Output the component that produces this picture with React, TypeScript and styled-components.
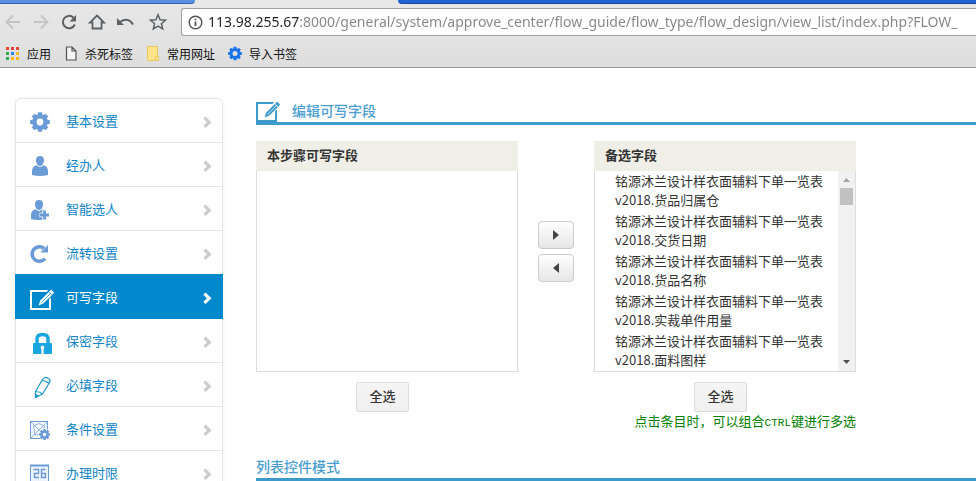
import React from "react";
import styled, { createGlobalStyle, css } from "styled-components";

const GlobalStyle = createGlobalStyle`
  *, *::before, *::after { box-sizing: border-box; }
  body {
    margin: 0;
    background: #fff;
    color: #333;
    font: 13px/20px "Noto Sans CJK SC", sans-serif;
  }
  a { text-decoration: none; }
  button, input, select { font: inherit; }
`;

const ACCENT = "#3d9acb";
const SOFT_BLUE = "#6b9bd6";

const Page = styled.div`
  height: 100vh;
  overflow: hidden;
`;

/* ---------- browser chrome ---------- */

const Chrome = styled.header`
  background: linear-gradient(#e8e8e8, #dedede);
  border-bottom: 1px solid #999;
`;

const TabStrip = styled.div`
  display: flex;
  height: 4px;
`;

const TabEdge = styled.div<{ $front?: boolean }>`
  ${(p) =>
    p.$front
      ? css`
          width: 203px;
        `
      : css`
          width: 195px;
          background: #5a8fe4;
          border-bottom: 1px solid #3465b5;
          border-bottom-right-radius: 4px;
        `}
`;

const StripRest = styled.div`
  flex: 1;
  background: #1f63d2;
  border-bottom: 1px solid #174a9c;
  border-bottom-left-radius: 4px;
`;

const Toolbar = styled.div`
  display: flex;
  align-items: center;
  gap: 8px;
  height: 36px;
  padding-left: 3px;
`;

const ToolButton = styled.button<{ $faded?: boolean }>`
  display: flex;
  padding: 0;
  border: 0;
  background: none;
  color: ${(p) => (p.$faded ? "#c4c4c4" : "#5f6062")};
`;

const Star = styled(ToolButton)`
  margin: 0 5px;
`;

const AddressBox = styled.div`
  flex: 1;
  display: flex;
  align-items: center;
  gap: 5px;
  height: 28px;
  padding-left: 6px;
  background: #fff;
  border: 1px solid #a0a0a0;
  border-right: 0;
  border-radius: 3px 0 0 3px;
`;

const Address = styled.input`
  flex: 1;
  min-width: 0;
  height: 24px;
  padding: 0;
  border: 0;
  outline: 0;
  font: 14px/24px "Noto Sans", sans-serif;
  color: transparent;
  background: linear-gradient(to right, #222 91px, #858585 91px);
  background-clip: text;
  -webkit-background-clip: text;
`;

const Bookmarks = styled.nav`
  display: flex;
  align-items: center;
  height: 27px;
  padding-left: 5px;
  gap: 12px;
`;

const Bookmark = styled.a`
  display: flex;
  align-items: center;
  gap: 6px;
  color: #111;
  font-size: 12px;
`;

/* ---------- page body ---------- */

const Body = styled.div`
  display: flex;
  align-items: flex-start;
  gap: 33px;
  padding: 30px 0 0 15px;
`;

const SideList = styled.ul`
  flex: none;
  width: 208px;
  margin: 0;
  padding: 0;
  list-style: none;
  border-radius: 6px;
  box-shadow: 0 1px 4px rgba(0, 0, 0, 0.065);
`;

const SideItem = styled.li`
  margin-bottom: -1px;
  &:first-child a {
    border-radius: 6px 6px 0 0;
  }
`;

const SideLink = styled.a<{ $active?: boolean }>`
  position: relative;
  z-index: ${(p) => (p.$active ? 1 : 0)};
  display: flex;
  align-items: center;
  gap: 10px;
  height: 45px;
  padding: 0 10px 0 14px;
  border: 1px solid ${(p) => (p.$active ? "#0088cc" : "#e5e5e5")};
  background: ${(p) => (p.$active ? "#0088cc" : "#fff")};
  color: ${(p) => (p.$active ? "#fff" : "#0f84c8")};
`;

const SideText = styled.span`
  flex: 1;
`;

const Chevron = styled.svg<{ $active?: boolean }>`
  fill: ${(p) => (p.$active ? "#fff" : "#ccc")};
`;

const Main = styled.main`
  flex: 1;
  min-width: 0;
`;

const SectionTitle = styled.h2`
  display: flex;
  align-items: center;
  gap: 10px;
  height: 27px;
  margin: 0;
  border-bottom: 3px solid ${ACCENT};
  color: #4a9ed0;
  font-size: 14px;
  font-weight: 500;
  line-height: 24px;
`;

const Transfer = styled.section`
  display: flex;
  align-items: flex-start;
  gap: 20px;
  padding: 16px 0 22px;
`;

const Column = styled.div`
  display: flex;
  flex-direction: column;
  width: 262px;
`;

const PanelLabel = styled.label`
  height: 30px;
  padding-left: 11px;
  background: #f0efe7;
  color: #333;
  font-weight: 700;
  line-height: 28px;
`;

const PanelFrame = styled.div`
  display: flex;
  height: 201px;
  border: 1px solid #ddd;
  border-top: 0;
`;

const FieldList = styled.select`
  flex: 1;
  min-width: 0;
  height: 200px;
  padding: 0;
  border: 0;
  outline: 0;
  background: #fff;
  color: #333;
  scrollbar-width: none;
`;

const Field = styled.option`
  display: block;
  min-height: 40px;
  padding: 0 0 0 20px;
  line-height: 20px;
  white-space: normal;
`;

const ScrollTrack = styled.div`
  display: flex;
  flex-direction: column;
  align-items: center;
  width: 17px;
  background: #f1f1f1;
`;

const ScrollThumb = styled.div`
  width: 13px;
  height: 17px;
  margin-bottom: auto;
  background: #c1c1c1;
`;

const MoveButtons = styled.div`
  display: flex;
  flex-direction: column;
  gap: 5px;
  padding-top: 80px;
`;

const MoveButton = styled.button`
  display: flex;
  align-items: center;
  justify-content: center;
  width: 36px;
  height: 28px;
  padding: 0;
  border: 1px solid #ccc;
  border-radius: 4px;
  background: linear-gradient(#fff, #e6e6e6);
`;

const SelectAllRow = styled.div`
  display: flex;
  justify-content: center;
  padding: 10px 9px 0 0;
`;

const SelectAll = styled.button`
  width: 53px;
  height: 30px;
  padding: 0 0 2px;
  border: 1px solid #dcdcdc;
  border-radius: 2px;
  background: linear-gradient(#f5f5f5, #f0f0f0);
  color: #333;
  font-weight: 500;
`;

const Hint = styled.p`
  margin: 0;
  color: #008000;
  line-height: 18px;
  padding-bottom: 2px;
  text-align: right;
  white-space: nowrap;
`;

const Latin = styled.span`
  font: 11px "Liberation Mono", monospace;
`;

/* ---------- icons ---------- */

const gearPath = (cx: number, cy: number, r: number, hole: number) => {
  const pts: string[] = [];
  const inner = r * 0.78;
  for (let i = 0; i < 8; i++) {
    const a = (i * Math.PI) / 4;
    [
      [-0.3, inner],
      [-0.2, r],
      [0.2, r],
      [0.3, inner],
    ].forEach(([d, q]) =>
      pts.push(`${(cx + q * Math.sin(a + d)).toFixed(2)} ${(cy - q * Math.cos(a + d)).toFixed(2)}`)
    );
  }
  return `M${pts.join("L")}ZM${cx - hole} ${cy}a${hole} ${hole} 0 1 0 ${hole * 2} 0a${hole} ${hole} 0 1 0 ${-hole * 2} 0Z`;
};

const EditShape = ({ color, back }: { color: string; back: string }) => (
  <>
    <path d="M0 0H21V20H0ZM2 2V18H19V2Z" fill={color} fillRule="evenodd" />
    <path d="M8 16L10 10L19 -1L25 3.500L14 14Z" fill={back} />
    <path d="M8.500 15.500L10.300 10.600L19.800 1L21.300 -.2L24 2.200L23 4L13.400 13.600Z" fill={color} />
    <path d="M11.500 12.500L21.300 2.700M18.600 2L22 5" stroke={back} strokeWidth=".7" fill="none" />
  </>
);

const icons: Record<string, React.ReactNode> = {
  gear: <path d={gearPath(10, 15, 10, 3.4)} fill={SOFT_BLUE} fillRule="evenodd" />,
  person: (
    <g fill={SOFT_BLUE}>
      <path d="M10 5C13 5 14.200 7 14 9.500C13.800 12.500 12 15 10 15S6.200 12.500 6 9.500C5.800 7 7 5 10 5Z" />
      <path d="M6.500 14.200L10 16.200L13.500 14.200C16.500 15 18 17 18 20V24Q10 26 2 24V20C2 17 3.500 15 6.500 14.200Z" />
    </g>
  ),
  personAdd: (
    <g>
      <path d="M9 5C12 5 13.200 7 13 9.500C12.800 12.500 11 15 9 15S5.200 12.500 5 9.500C4.800 7 6 5 9 5Z" fill={SOFT_BLUE} />
      <path d="M5.500 14.200L9 16.200L12.500 14.200C14.500 15 16 16 16.500 18V24Q9 26 1 24V20C1 17 2.500 15 5.500 14.200Z" fill={SOFT_BLUE} />
      <path d="M14.500 15V25.500M9.500 20H20" stroke="#fff" strokeWidth="4.500" />
      <path d="M14.500 15.500V24.500M10 20H19" stroke={SOFT_BLUE} strokeWidth="2.800" />
    </g>
  ),
  refresh: (
    <g>
      <path d="M15 19.500A7.200 7.200 0 1 1 14 9.500" fill="none" stroke={SOFT_BLUE} strokeWidth="3.600" />
      <path d="M18 6V13.500H10.500Z" fill={SOFT_BLUE} />
    </g>
  ),
  edit: (
    <g transform="translate(0 7)">
      <EditShape color="#fff" back="#0088cc" />
    </g>
  ),
  lock: (
    <g>
      <path d="M7 17V12Q7 7.500 12.500 7.500T18 12V17" fill="none" stroke="#18a5e0" strokeWidth="3.400" />
      <rect x="3" y="16" width="19" height="11" rx="1" fill="#18a5e0" />
      <path d="M12.500 18.500A2 2 0 0 1 13.600 22.100V27H11.400V22.100A2 2 0 0 1 12.500 18.500Z" fill="#fff" />
    </g>
  ),
  pencil: (
    <g fill="none" stroke="#1b95cf" strokeWidth="1.200" strokeLinejoin="round">
      <path d="M5.500 26.500V20.500L12.500 8.500Q15 5 18.500 7.500Q21 9 19.500 11.500L12.500 23Z" />
      <path d="M12 9.500Q16 9.500 19 12.500M5.500 20.500Q10 20.500 12.500 23" />
      <path d="M5.500 26.500V23.500L8 25Z" fill="#1b95cf" />
    </g>
  ),
  condition: (
    <g>
      <g fill="none" stroke={SOFT_BLUE}>
        <rect x=".5" y="6.500" width="17" height="17" fill="#f3f7fc" />
        <path d="M1 7L17 23M17 7L1 23M9 8.500L14.500 11L13.500 19L5 20L3.500 11Z" strokeWidth=".7" />
      </g>
      <circle cx="14.500" cy="19.500" r="6" fill="#fff" />
      <path d={gearPath(14.5, 19.5, 5.6, 1.8)} fill={SOFT_BLUE} fillRule="evenodd" />
    </g>
  ),
  calendar: (
    <g fill="none" stroke={SOFT_BLUE}>
      <rect x=".5" y="6.500" width="18" height="17" fill="#edf3fb" />
      <path d="M0 6.500H19" strokeWidth="2" />
      <path d="M3.500 10.500H8.500V14.500H4.500V18.500H9M15.500 10.500H11.500V18.500H15.500V14.500H11.500" strokeWidth="1.400" />
    </g>
  ),
};

const sideItems = [
  { icon: "gear", text: "基本设置" },
  { icon: "person", text: "经办人" },
  { icon: "personAdd", text: "智能选人" },
  { icon: "refresh", text: "流转设置" },
  { icon: "edit", text: "可写字段", active: true },
  { icon: "lock", text: "保密字段" },
  { icon: "pencil", text: "必填字段" },
  { icon: "condition", text: "条件设置" },
  { icon: "calendar", text: "办理时限" },
];

const fields = ["货品归属仓", "交货日期", "货品名称", "实裁单件用量", "面料图样"];

const ToolIcon = ({ children }: { children: React.ReactNode }) => (
  <svg width="20" height="20" viewBox="0 0 20 20" fill="none" stroke="currentColor" strokeWidth="2" aria-hidden="true">
    {children}
  </svg>
);

const appColors = ["#ea4335", "#ea4335", "#ea4335", "#34a853", "#2a86f3", "#fbbc05", "#34a853", "#fbbc05", "#fbbc05"];

const BrowserChrome = () => (
  <Chrome>
    <TabStrip>
      <TabEdge />
      <TabEdge $front />
      <StripRest />
    </TabStrip>
    <Toolbar>
      <ToolButton $faded aria-label="后退">
        <ToolIcon><path d="M17 10H4M10 3.500L3.500 10L10 16.500" /></ToolIcon>
      </ToolButton>
      <ToolButton $faded aria-label="前进">
        <ToolIcon><path d="M3 10H16M10 3.500L16.500 10L10 16.500" /></ToolIcon>
      </ToolButton>
      <ToolButton aria-label="刷新">
        <ToolIcon>
          <path d="M15.800 12.500A6.200 6.200 0 1 1 14.500 5.700" />
          <path d="M17 3V9.500H10.500Z" fill="currentColor" stroke="none" />
        </ToolIcon>
      </ToolButton>
      <ToolButton aria-label="主页">
        <ToolIcon><path d="M10 3.500L17 10.500H14.500V16.500H5.500V10.500H3Z" strokeWidth="1.800" /></ToolIcon>
      </ToolButton>
      <ToolButton aria-label="撤销">
        <ToolIcon>
          <path d="M5 10Q13 4.500 18 12.500" />
          <path d="M2 6V13H9Z" fill="currentColor" stroke="none" />
        </ToolIcon>
      </ToolButton>
      <Star aria-label="收藏">
        <ToolIcon>
          <path d="M10 2.800L12.100 7.800L17.500 8.200L13.400 11.700L14.700 17L10 14.100L5.300 17L6.600 11.700L2.500 8.200L7.900 7.800Z" strokeWidth="1.500" />
        </ToolIcon>
      </Star>
      <AddressBox>
        <svg width="15" height="15" viewBox="0 0 15 15" fill="none" stroke="#555" aria-hidden="true">
          <circle cx="7.500" cy="7.500" r="6.300" strokeWidth="1.500" />
          <path d="M7.500 6.500V11M7.500 3.700V5.300" strokeWidth="1.800" />
        </svg>
        <Address
          aria-label="地址"
          defaultValue="113.98.255.67:8000/general/system/approve_center/flow_guide/flow_type/flow_design/view_list/index.php?FLOW_"
        />
      </AddressBox>
    </Toolbar>
    <Bookmarks aria-label="书签">
      <Bookmark href="#apps">
        <svg width="16" height="15" viewBox="0 0 16 15" aria-hidden="true">
          {appColors.map((c, i) => (
            <rect key={i} x={1 + (i % 3) * 5} y={1 + Math.floor(i / 3) * 5} width="3" height="3" fill={c} />
          ))}
        </svg>
        应用
      </Bookmark>
      <Bookmark href="#kill">
        <svg width="16" height="15" viewBox="0 0 16 15" aria-hidden="true">
          <path d="M3.500 1H9L13 5V14H3.500ZM9 1V5H13" fill="#f4f4f4" stroke="#555" strokeWidth="1.200" />
        </svg>
        杀死标签
      </Bookmark>
      <Bookmark href="#common">
        <svg width="16" height="15" viewBox="0 0 16 15" aria-hidden="true">
          <path d="M2.500 .5H12.500V10.500H13.500V14.500H2.500Z" fill="#ffe48c" stroke="#ecc95f" />
          <path d="M10.500 14V10.500H13" fill="none" stroke="#ecc95f" />
        </svg>
        常用网址
      </Bookmark>
      <Bookmark href="#import">
        <svg width="16" height="15" viewBox="0 0 16 15" aria-hidden="true">
          <path d={gearPath(8, 7.5, 7, 2.5)} fill="#1a73e8" fillRule="evenodd" />
        </svg>
        导入书签
      </Bookmark>
    </Bookmarks>
  </Chrome>
);

export default function App() {
  return (
    <Page>
      <GlobalStyle />
      <BrowserChrome />
      <Body>
        <nav aria-label="流程设置">
          <SideList>
            {sideItems.map((item) => (
              <SideItem key={item.text}>
                <SideLink href={`#${item.icon}`} $active={item.active} aria-current={item.active ? "page" : undefined}>
                  <svg width="26" height="27" viewBox="0 0 26 27" aria-hidden="true">
                    {icons[item.icon]}
                  </svg>
                  <SideText>{item.text}</SideText>
                  <Chevron $active={item.active} width="9" height="14" viewBox="0 -2 9 14" aria-hidden="true">
                    <path d="M2.500 .5L8.500 6.200L2.500 12L.3 9.800L3.900 6.200L.3 2.700Z" />
                  </Chevron>
                </SideLink>
              </SideItem>
            ))}
          </SideList>
        </nav>
        <Main>
          <SectionTitle>
            <svg width="26" height="24" viewBox="0 0 26 24" aria-hidden="true">
              <g transform="translate(0 4)">
                <EditShape color={ACCENT} back="#fff" />
              </g>
            </svg>
            编辑可写字段
          </SectionTitle>
          <Transfer>
            <Column>
              <PanelLabel htmlFor="chosen">本步骤可写字段</PanelLabel>
              <PanelFrame>
                <FieldList id="chosen" multiple />
              </PanelFrame>
              <SelectAllRow>
                <SelectAll>全选</SelectAll>
              </SelectAllRow>
            </Column>
            <MoveButtons>
              <MoveButton aria-label="移到备选字段">
                <svg width="6" height="12" viewBox="0 0 6 12" aria-hidden="true"><path d="M0 1L6 6L0 11Z" fill="#444" /></svg>
              </MoveButton>
              <MoveButton aria-label="移到可写字段">
                <svg width="6" height="12" viewBox="0 0 6 12" aria-hidden="true"><path d="M6 1L0 6L6 11Z" fill="#444" /></svg>
              </MoveButton>
            </MoveButtons>
            <Column>
              <PanelLabel htmlFor="available">备选字段</PanelLabel>
              <PanelFrame>
                <FieldList id="available" multiple>
                  {fields.map((name) => (
                    <Field key={name}>{`铭源沐兰设计样衣面辅料下单一览表v2018.${name}`}</Field>
                  ))}
                </FieldList>
                <ScrollTrack aria-hidden="true">
                  <svg width="17" height="17" viewBox="0 0 17 17"><path d="M5 11L8.500 7L12 11Z" fill="#a3a3a3" /></svg>
                  <ScrollThumb />
                  <svg width="17" height="17" viewBox="0 0 17 17"><path d="M5 6L8.500 10L12 6Z" fill="#505050" /></svg>
                </ScrollTrack>
              </PanelFrame>
              <SelectAllRow>
                <SelectAll>全选</SelectAll>
              </SelectAllRow>
              <Hint>
                点击条目时，可以组合<Latin>CTRL</Latin>键进行多选
              </Hint>
            </Column>
          </Transfer>
          <SectionTitle>列表控件模式</SectionTitle>
        </Main>
      </Body>
    </Page>
  );
}
